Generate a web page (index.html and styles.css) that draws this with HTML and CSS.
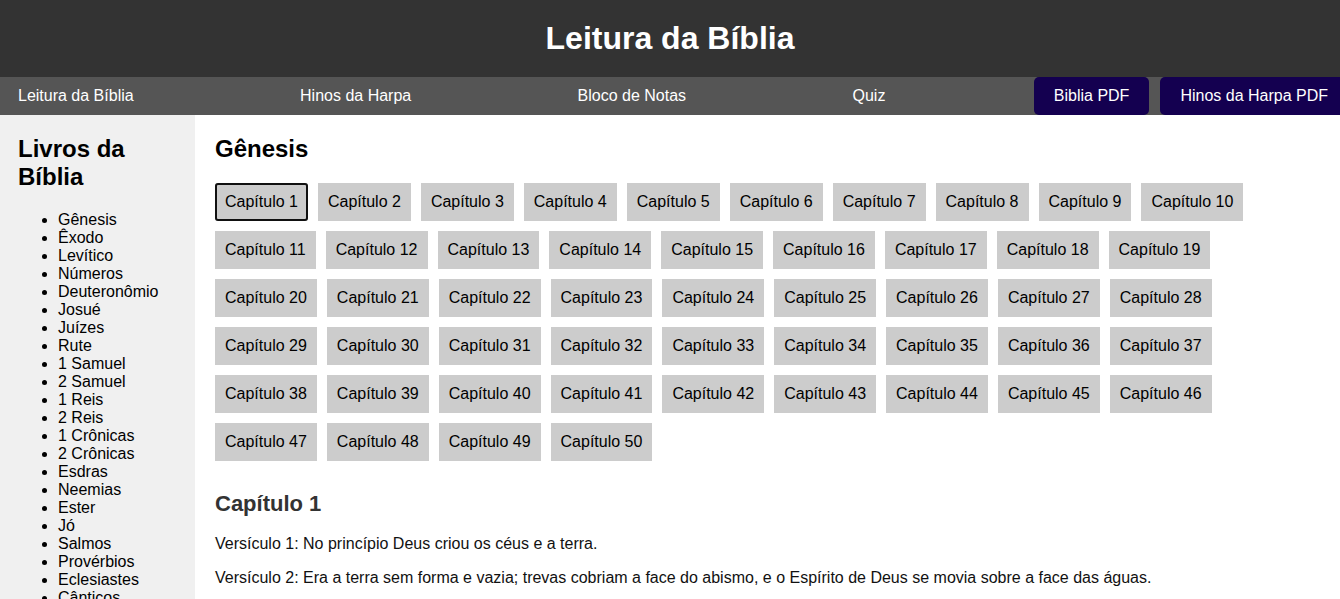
FILE: index.html
```html
<!DOCTYPE html>
<html lang="pt-BR">
<head>
<meta charset="utf-8">
<title>Leitura da Bíblia</title>
<link rel="stylesheet" href="styles.css">
</head>
<body>
<header class="site-header">
  <h1 class="site-title">Leitura da Bíblia</h1>
</header>
<nav class="main-nav">
  <a class="nav-link" href="#">Leitura da Bíblia</a>
  <a class="nav-link" href="#">Hinos da Harpa</a>
  <a class="nav-link" href="#">Bloco de Notas</a>
  <a class="nav-link" href="#">Quiz</a>
  <div class="pdf-group">
    <a class="pdf-btn" href="#">Biblia PDF</a>
    <a class="pdf-btn" href="#">Hinos da Harpa PDF</a>
  </div>
</nav>
<div class="layout">
  <aside class="sidebar">
    <h2 class="sidebar-title">Livros da Bíblia</h2>
    <ul class="book-list">
      <li>Gênesis</li><li>Êxodo</li><li>Levítico</li><li>Números</li><li>Deuteronômio</li><li>Josué</li><li>Juízes</li><li>Rute</li><li>1 Samuel</li><li>2 Samuel</li><li>1 Reis</li><li>2 Reis</li><li>1 Crônicas</li><li>2 Crônicas</li><li>Esdras</li><li>Neemias</li><li>Ester</li><li>Jó</li><li>Salmos</li><li>Provérbios</li><li>Eclesiastes</li><li>Cânticos</li><li>Isaías</li><li>Jeremias</li><li>Lamentações</li><li>Ezequiel</li><li>Daniel</li><li>Oséias</li><li>Joel</li><li>Amós</li><li>Obadias</li><li>Jonas</li><li>Miquéias</li><li>Naum</li><li>Habacuque</li><li>Sofonias</li><li>Ageu</li><li>Zacarias</li><li>Malaquias</li>
    </ul>
  </aside>
  <main class="content">
    <h2 class="book-title">Gênesis</h2>
    <div class="chapters">
      <button class="chapter-btn active">Capítulo 1</button>
      <button class="chapter-btn">Capítulo 2</button>
      <button class="chapter-btn">Capítulo 3</button>
      <button class="chapter-btn">Capítulo 4</button>
      <button class="chapter-btn">Capítulo 5</button>
      <button class="chapter-btn">Capítulo 6</button>
      <button class="chapter-btn">Capítulo 7</button>
      <button class="chapter-btn">Capítulo 8</button>
      <button class="chapter-btn">Capítulo 9</button>
      <button class="chapter-btn">Capítulo 10</button>
      <button class="chapter-btn">Capítulo 11</button>
      <button class="chapter-btn">Capítulo 12</button>
      <button class="chapter-btn">Capítulo 13</button>
      <button class="chapter-btn">Capítulo 14</button>
      <button class="chapter-btn">Capítulo 15</button>
      <button class="chapter-btn">Capítulo 16</button>
      <button class="chapter-btn">Capítulo 17</button>
      <button class="chapter-btn">Capítulo 18</button>
      <button class="chapter-btn">Capítulo 19</button>
      <button class="chapter-btn">Capítulo 20</button>
      <button class="chapter-btn">Capítulo 21</button>
      <button class="chapter-btn">Capítulo 22</button>
      <button class="chapter-btn">Capítulo 23</button>
      <button class="chapter-btn">Capítulo 24</button>
      <button class="chapter-btn">Capítulo 25</button>
      <button class="chapter-btn">Capítulo 26</button>
      <button class="chapter-btn">Capítulo 27</button>
      <button class="chapter-btn">Capítulo 28</button>
      <button class="chapter-btn">Capítulo 29</button>
      <button class="chapter-btn">Capítulo 30</button>
      <button class="chapter-btn">Capítulo 31</button>
      <button class="chapter-btn">Capítulo 32</button>
      <button class="chapter-btn">Capítulo 33</button>
      <button class="chapter-btn">Capítulo 34</button>
      <button class="chapter-btn">Capítulo 35</button>
      <button class="chapter-btn">Capítulo 36</button>
      <button class="chapter-btn">Capítulo 37</button>
      <button class="chapter-btn">Capítulo 38</button>
      <button class="chapter-btn">Capítulo 39</button>
      <button class="chapter-btn">Capítulo 40</button>
      <button class="chapter-btn">Capítulo 41</button>
      <button class="chapter-btn">Capítulo 42</button>
      <button class="chapter-btn">Capítulo 43</button>
      <button class="chapter-btn">Capítulo 44</button>
      <button class="chapter-btn">Capítulo 45</button>
      <button class="chapter-btn">Capítulo 46</button>
      <button class="chapter-btn">Capítulo 47</button>
      <button class="chapter-btn">Capítulo 48</button>
      <button class="chapter-btn">Capítulo 49</button>
      <button class="chapter-btn">Capítulo 50</button>
    </div>
    <section class="chapter-text">
      <h2 class="chapter-title">Capítulo 1</h2>
      <p class="verse">Versículo 1: No princípio Deus criou os céus e a terra.</p>
      <p class="verse">Versículo 2: Era a terra sem forma e vazia; trevas cobriam a face do abismo, e o Espírito de Deus se movia sobre a face das águas.</p>
      <p class="verse">Versículo 3: Disse Deus: "Haja luz", e houve luz.</p>
      <p class="verse">Versículo 4: Deus viu que a luz era boa, e separou a luz das trevas.</p>
      <p class="verse">Versículo 5: Deus chamou à luz dia, e às trevas chamou noite. Passaram-se a tarde e a manhã; esse foi o primeiro dia.</p>
    </section>
  </main>
</div>
</body>
</html>
```

FILE: styles.css
```css
html, body {
  margin: 0;
  padding: 0;
}

body {
  font-family: "Liberation Sans", Arial, sans-serif;
  font-size: 16px;
  color: #000;
  background: #fff;
  overflow-x: hidden;
}

.site-header {
  background: #333;
  color: #fff;
  padding: 20px;
  text-align: center;
}

.site-title {
  margin: 0;
  font-size: 32px;
  font-weight: bold;
}

.main-nav {
  background: #555;
  height: 38px;
  display: flex;
  justify-content: space-between;
  align-items: center;
  overflow: hidden;
}

.nav-link {
  color: #fff;
  text-decoration: none;
  padding: 0 18px;
}

.pdf-group {
  display: flex;
  gap: 11px;
  height: 100%;
  margin-right: -8px;
}

.pdf-btn {
  display: flex;
  align-items: center;
  padding: 0 20px;
  background: #140050;
  color: #fff;
  text-decoration: none;
  border-radius: 5px;
}

.layout {
  display: flex;
  align-items: stretch;
}

.sidebar {
  width: 195px;
  flex: none;
  box-sizing: border-box;
  background: #f0f0f0;
  padding: 0 18px;
  overflow: hidden;
}

.sidebar-title {
  font-size: 24px;
  margin: 19.92px 0;
  line-height: 28px;
}

.book-list {
  margin: 16px 0;
  padding-left: 40px;
  line-height: 18px;
}

.content {
  flex: 1;
  padding: 0 20px;
}

.book-title {
  font-size: 24px;
  margin: 19.92px 0;
}

.chapters {
  display: flex;
  flex-wrap: wrap;
  gap: 10px;
  padding-bottom: 12px;
}

.chapter-btn {
  font-family: inherit;
  font-size: 16px;
  color: #000;
  background: #ccc;
  border: none;
  padding: 10px;
  line-height: 18px;
  cursor: pointer;
}

.chapter-btn.active {
  box-shadow: inset 0 0 0 2px #111;
  border-radius: 3px;
}

.chapter-title {
  font-size: 22px;
  color: #333;
  margin: 18px 0;
}

.verse {
  margin: 16px 0;
  color: #111;
}
```
